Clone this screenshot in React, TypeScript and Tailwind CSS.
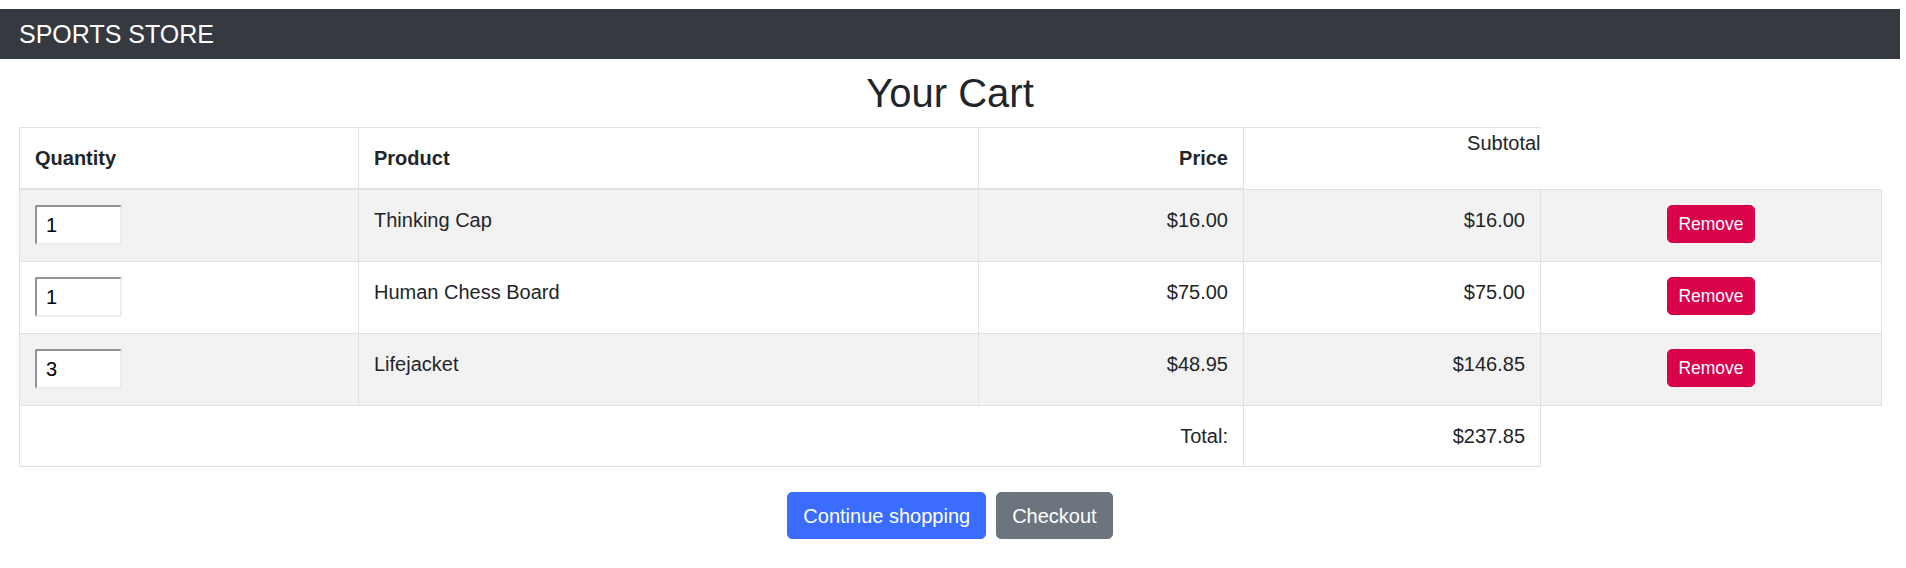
import React from "react";

interface Line {
  id: number;
  name: string;
  qty: number;
  price: number;
}

const lines: Line[] = [
  { id: 1, name: "Thinking Cap", qty: 1, price: 16 },
  { id: 2, name: "Human Chess Board", qty: 1, price: 75 },
  { id: 3, name: "Lifejacket", qty: 3, price: 48.95 },
];

const cell = "border border-[#dee2e6] px-[15px] py-[15px] align-top leading-[30px]";

export default function App() {
  const total = lines.reduce((sum, l) => sum + l.qty * l.price, 0);

  return (
    <div className="w-[1900px] pt-[9px] font-['Liberation_Sans',Arial,sans-serif] text-[20px] text-[#212529] bg-white">
      <div className="h-[50px] bg-[#343a40] px-[19px] flex items-center">
        <span className="text-white text-[25px] leading-[50px]">SPORTS STORE</span>
      </div>

      <div className="px-[19px]">
        <h2 className="text-center text-[40px] leading-[48px] my-[10px] font-normal">Your Cart</h2>

        <table className="table-fixed border-collapse w-[1862px] mb-[20px]">
          <colgroup>
            <col className="w-[339px]" />
            <col className="w-[620px]" />
            <col className="w-[265px]" />
            <col className="w-[297px]" />
            <col className="w-[341px]" />
          </colgroup>
          <thead>
            <tr>
              <th className={`${cell} border-b-2 text-left align-bottom font-bold`}>Quantity</th>
              <th className={`${cell} border-b-2 text-left align-bottom font-bold`}>Product</th>
              <th className={`${cell} border-b-2 text-right align-bottom font-bold`}>Price</th>
              <th className="border-t border-[#dee2e6] p-0 text-right align-top font-normal leading-[30px]">
                Subtotal
              </th>
            </tr>
          </thead>
          <tbody>
            {lines.map((l, i) => (
              <tr key={l.id} className={i % 2 === 0 ? "bg-[#f2f2f2]" : "bg-white"}>
                <td className={cell}>
                  <div className="h-[41px]">
                    <input
                      type="number"
                      defaultValue={l.qty}
                      className="block w-[87px] h-[40px] bg-white pl-[9px] text-[20px] text-black rounded-[2px] border-2 border-t-[#939393] border-l-[#939393] border-r-[#ececec] border-b-[#ececec] outline-none [appearance:textfield]"
                    />
                  </div>
                </td>
                <td className={cell}>{l.name}</td>
                <td className={`${cell} text-right`}>${l.price.toFixed(2)}</td>
                <td className={`${cell} text-right`}>${(l.qty * l.price).toFixed(2)}</td>
                <td className={`${cell} text-center`}>
                  <button className="bg-[#d9004c] text-white text-[17.5px] leading-[26px] px-[10px] py-[5px] rounded-[5px] border border-[#d9004c]">
                    Remove
                  </button>
                </td>
              </tr>
            ))}
          </tbody>
          <tfoot>
            <tr>
              <td colSpan={3} className={`${cell} text-right`}>Total:</td>
              <td className={`${cell} text-right`}>${total.toFixed(2)}</td>
            </tr>
          </tfoot>
        </table>

        <div className="text-center">
          <button className="m-[5px] bg-[#3a6cff] text-white text-[20px] leading-[30px] px-[15px] py-[7.5px] rounded-[5px] border border-[#3a6cff]">
            Continue shopping
          </button>
          <button className="m-[5px] bg-[#6c757d] text-white text-[20px] leading-[30px] px-[15px] py-[7.5px] rounded-[5px] border border-[#6c757d]">
            Checkout
          </button>
        </div>
      </div>
    </div>
  );
}
